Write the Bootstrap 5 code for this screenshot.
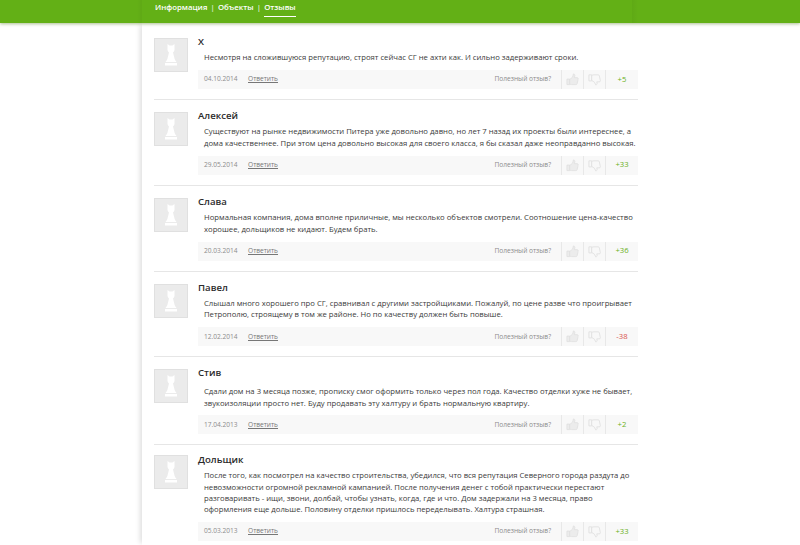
<!DOCTYPE html>
<html lang="ru">
<head>
  <meta charset="UTF-8" />
  <meta name="viewport" content="width=device-width, initial-scale=1.0" />
  <title>Отзывы</title>
  <link href="https://cdn.jsdelivr.net/npm/bootstrap@5.3.3/dist/css/bootstrap.min.css" rel="stylesheet" />
  <style>
    body {
      font-family: "Open Sans", "Liberation Sans", sans-serif;
      background-color: #fff;
      color: #333;
      overflow: hidden;
      height: 545px;
    }
    .top-bar {
      height: 23px;
      background-color: #63b016;
      background-image: linear-gradient(to right, transparent 137px, rgba(0, 0, 0, .04) 142px, transparent 142px, transparent 632px, rgba(0, 0, 0, .04) 632px, transparent 638px);
      box-shadow: 0 1px 3px rgba(90, 130, 40, .5);
      padding-left: 155px;
      position: relative;
      z-index: 2;
    }
    .top-link {
      font-size: 7.8px;
      font-weight: 600;
      color: #fff;
      text-decoration: none;
      line-height: 15px;
      height: 17px;
    }
    .top-link.current { border-bottom: 1px solid #fff; }
    .top-sep { font-size: 7.7px; color: #fff; line-height: 15px; margin: 0 3.2px; }
    .review-col {
      width: 508px;
      margin-left: 142px;
      padding: 15px 12px 0;
      box-shadow: -4px 0 5px -2px rgba(0, 0, 0, .13);
      height: 522px;
    }
    .review { border-bottom: 1px solid #e6e6e6; margin-bottom: 12px; }
    .review:last-child { border-bottom: 0; }
    .ava {
      width: 34px;
      height: 34px;
      flex: none;
      background: #ebebeb;
      border: 1px solid #e0e0e0;
      margin-right: 10px;
    }
    .who { font-size: 9.6px; font-weight: 600; line-height: 12px; color: #2b2b2b; margin: -2px 0 4px; }
    .txt { font-size: 7.7px; line-height: 11.9px; margin: 0 0 6px 6px; color: #3a3a3a; }
    .foot {
      background: #f8f8f8;
      height: 19px;
      font-size: 6.6px;
      color: #8c8c8c;
      margin-bottom: 10px;
    }
    .foot-date { width: 44px; margin-left: 6px; }
    .foot-reply { color: #777; text-decoration: underline; }
    .foot-ask { margin-right: 10px; }
    .cell { width: 22px; height: 19px; border-left: 1px solid #e8e8e8; }
    .score { width: 33px; height: 19px; border-left: 1px solid #e8e8e8; font-size: 7.7px; font-weight: 500; }
    .up { color: #6cb023; }
    .down { color: #d9534f; }
    /* last two reviews sit a little differently in the original */
    .review:nth-child(5) { margin-bottom: 10px; }
    .review:nth-child(5) .who { margin-bottom: 7px; }
    .review:nth-child(5) .txt { margin-bottom: 5px; }
    .review:nth-child(6) .who { margin-top: -1px; }
    .review:nth-child(6) .txt { line-height: 11.4px; }
  </style>
</head>
<body>
  <div class="top-bar d-flex align-items-start">
    <a class="top-link" href="#">Информация</a><span class="top-sep">|</span>
    <a class="top-link" href="#">Объекты</a><span class="top-sep">|</span>
    <a class="top-link current" href="#">Отзывы</a>
  </div>

  <div class="review-col" id="list"></div>

  <script>
    var data = [
      ["Х", "Несмотря на сложившуюся репутацию, строят сейчас СГ не ахти как. И сильно задерживают сроки.", "04.10.2014", "+5", 0],
      ["Алексей", "Существуют на рынке недвижимости Питера уже довольно давно, но лет 7 назад их проекты были интереснее, а дома качественнее. При этом цена довольно высокая для своего класса, я бы сказал даже неоправданно высокая.", "29.05.2014", "+33", 0],
      ["Слава", "Нормальная компания, дома вполне приличные, мы несколько объектов смотрели. Соотношение цена-качество хорошее, дольщиков не кидают. Будем брать.", "20.03.2014", "+36", 0],
      ["Павел", "Слышал много хорошего про СГ, сравнивал с другими застройщиками. Пожалуй, по цене разве что проигрывает Петрополю, строящему в том же районе. Но по качеству должен быть повыше.", "12.02.2014", "-38", 1],
      ["Стив", "Сдали дом на 3 месяца позже, прописку смог оформить только через пол года. Качество отделки хуже не бывает, звукоизоляции просто нет. Буду продавать эту халтуру и брать нормальную квартиру.", "17.04.2013", "+2", 0],
      ["Дольщик", "После того, как посмотрел на качество строительства, убедился, что вся репутация Северного города раздута до невозможности огромной рекламной кампанией. После получения денег с тобой практически перестают разговаривать - ищи, звони, долбай, чтобы узнать, когда, где и что. Дом задержали на 3 месяца, право оформления еще дольше. Половину отделки пришлось переделывать. Халтура страшная.", "05.03.2013", "+33", 0]
    ];
    var pawn = '<svg width="32" height="32" viewBox="0 0 32 32"><path fill="#fff" d="M12.500 5l2 1.500h3l2-1.500v5.500c0 1.500-1 2.500-1.500 3l1.500 6c.3 1.200 1 2 2 3.500h-11c1-1.500 1.700-2.300 2-3.500l1.500-6c-.5-.5-1.500-1.500-1.500-3z"/><rect x="10" y="24" width="12" height="2.500" fill="#fff"/></svg>';
    var like = '<svg width="13" height="13" viewBox="0 0 14 14" fill="#ececec" stroke="#dedede" stroke-width=".8"><path d="M1 6.500h3v6H1z"/><path d="M4 7l3-2.500L8 1c1.200 0 1.800 1 1.500 2.200L9 5h3c1 0 1.400 1 1 1.800l-1 4.700c-.2.700-.7 1-1.300 1H6L4 12z"/></svg>';
    var dislike = '<svg width="13" height="13" viewBox="0 0 14 14" fill="#f8f8f8" stroke="#dedede" stroke-width=".9"><path d="M1 2h3v6.500H1z"/><path d="M4 2.500L6 2h5c.6 0 1 .3 1.200 1l1 4.700c.4.800 0 1.800-1 1.800H9.500l.3 1.500c.2 1-.5 1.800-1.500 1.800L7 10 4 8z"/></svg>';
    var html = "";
    data.forEach(function (r) {
      html += '<div class="review d-flex">' +
        '<div class="ava d-flex align-items-center justify-content-center">' + pawn + '</div>' +
        '<div class="flex-grow-1">' +
        '<div class="who">' + r[0] + '</div>' +
        '<p class="txt">' + r[1] + '</p>' +
        '<div class="foot d-flex align-items-center">' +
        '<span class="foot-date">' + r[2] + '</span><a class="foot-reply" href="#">Ответить</a>' +
        '<span class="ms-auto foot-ask">Полезный отзыв?</span>' +
        '<span class="cell d-flex align-items-center justify-content-center">' + like + '</span>' +
        '<span class="cell d-flex align-items-center justify-content-center">' + dislike + '</span>' +
        '<span class="score d-flex align-items-center justify-content-center ' + (r[4] ? "down" : "up") + '">' + r[3] + '</span>' +
        '</div></div></div>';
    });
    document.getElementById("list").innerHTML = html;
  </script>
  <script src="https://cdn.jsdelivr.net/npm/bootstrap@5.3.3/dist/js/bootstrap.bundle.min.js"></script>
</body>
</html>
